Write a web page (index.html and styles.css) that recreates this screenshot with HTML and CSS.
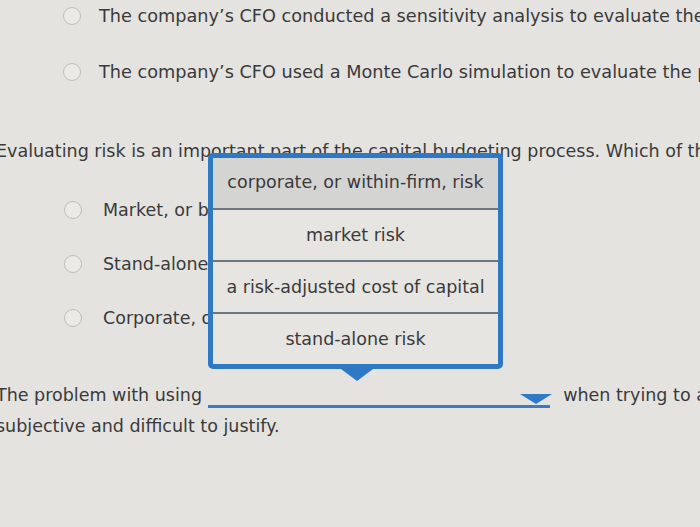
FILE: index.html
```
<!DOCTYPE html>
<html lang="en">

<head>
    <meta charset="UTF-8">
    <title>Capital budgeting quiz</title>
    <link rel="stylesheet" href="styles.css">
</head>

<body>
    <div class="page">
        <ul class="choices top">
            <li><span class="radio"></span>The company’s CFO conducted a sensitivity analysis to evaluate the project’s risk.</li>
            <li><span class="radio"></span>The company’s CFO used a Monte Carlo simulation to evaluate the project’s risk.</li>
        </ul>

        <p class="question">Evaluating risk is an important part of the capital budgeting process. Which of the following is true?</p>

        <ul class="choices">
            <li><span class="radio"></span>Market, or beta, risk</li>
            <li><span class="radio"></span>Stand-alone risk</li>
            <li><span class="radio"></span>Corporate, or within-firm, risk</li>
        </ul>

        <p class="fill">The problem with using <span class="blank"><span class="caret"></span></span> when trying to adjust for risk is that it is
            <br>subjective and difficult to justify.</p>

        <div class="dropdown">
            <div class="option active">corporate, or within-firm, risk</div>
            <div class="option">market risk</div>
            <div class="option">a risk-adjusted cost of capital</div>
            <div class="option">stand-alone risk</div>
            <span class="pointer"></span>
        </div>
    </div>
</body>

</html>
```

FILE: styles.css
```
* {
    padding: 0;
    margin: 0;
    box-sizing: border-box;
}

body {
    background-color: #e4e3df;
    color: #3a3a3c;
    font-family: "DejaVu Sans", Verdana, sans-serif;
    font-size: 17.5px;
    overflow: hidden;
}

.page {
    position: relative;
    display: flow-root;
    height: 527px;
    white-space: nowrap;
}

.choices {
    list-style: none;
    padding-left: 63px;
}

.choices li {
    display: flex;
    align-items: center;
    height: 54px;
}

.choices.top {
    margin-top: -12px;
    font-size: 17.7px;
}

.choices.top li {
    height: 56px;
}

.radio {
    width: 18px;
    height: 18px;
    border-radius: 50%;
    border: 1px solid #bdbdbb;
    background-color: #ebeae7;
    margin-right: 18px;
    flex-shrink: 0;
}

.choices:not(.top) {
    padding-left: 64px;
    margin-top: 22px;
}

.choices:not(.top) .radio {
    margin-right: 21px;
}

.question {
    margin-top: 41px;
    margin-left: -4px;
    line-height: 20px;
}

.fill {
    margin-top: 35px;
    margin-left: -4px;
    line-height: 31px;
}

.blank {
    display: inline-block;
    position: relative;
    width: 342px;
    height: 20px;
    margin: 0 8px 0 0;
    border-bottom: 3px solid #3c7bc0;
    vertical-align: -7px;
}

.caret {
    position: absolute;
    right: -2px;
    bottom: 1px;
    width: 0;
    height: 0;
    border-left: 16px solid transparent;
    border-right: 16px solid transparent;
    border-top: 10px solid #2f79c6;
}

.dropdown {
    position: absolute;
    left: 208px;
    top: 153px;
    width: 295px;
    border: 5px solid #2f78c4;
    border-radius: 5px;
    background-color: #e6e5e1;
}

.option {
    height: 52px;
    line-height: 50px;
    text-align: center;
    border-top: 2px solid #6d7683;
}

.option:first-child {
    border-top: none;
    height: 50px;
    line-height: 48px;
}

.option.active {
    background-color: #d4d4d2;
}

.pointer {
    position: absolute;
    left: 128px;
    bottom: -17px;
    width: 0;
    height: 0;
    border-left: 16px solid transparent;
    border-right: 16px solid transparent;
    border-top: 12px solid #2f78c4;
}
```
